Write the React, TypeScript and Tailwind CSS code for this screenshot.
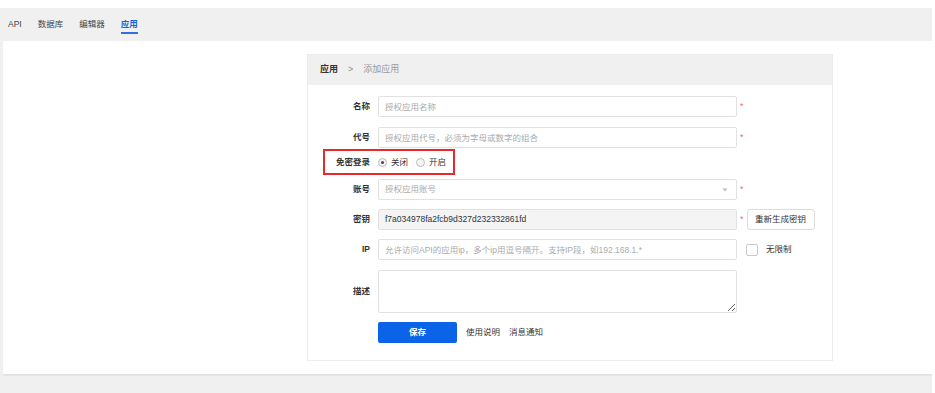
import React from "react";

const font = { fontFamily: '"Liberation Sans", "Noto Sans CJK SC", sans-serif' };

function Label({ children }: { children: React.ReactNode }) {
  return (
    <div className="w-[62px] shrink-0 text-right font-bold text-[8.5px] text-[#333] leading-none">
      {children}
    </div>
  );
}

function Star() {
  return <span className="ml-[3px] text-[9px] leading-none text-[#f56c6c]">*</span>;
}

export default function App() {
  return (
    <div className="w-[935px] h-[393px] bg-white pt-[8px] overflow-hidden" style={font}>
      <div className="w-[932px] h-[385px] bg-[#f0f0f0] flex flex-col">
        {/* tabs */}
        <div className="h-[33px] flex items-start gap-[16px] pl-[8px] pt-[11px] text-[8.5px] text-[#444] shrink-0">
          <span className="leading-[10px]">API</span>
          <span className="leading-[10px]">数据库</span>
          <span className="leading-[10px]">编辑器</span>
          <span className="leading-[10px] text-[#1a5fd8] font-bold border-b-2 border-[#2f6fe0] pb-[3px]">应用</span>
        </div>
        {/* panel */}
        <div className="ml-[3px] w-[929px] h-[334px] bg-white border-b border-[#e2e2e2] shadow-[0_1px_1px_rgba(0,0,0,0.04)] pt-[13px] pl-[304px] shrink-0">
          <div className="w-[526px] h-[307px] border border-[#ececec] bg-white flex flex-col">
            <div className="h-[30px] bg-[#f0f0f0] flex items-center pl-[12px] text-[9px] shrink-0">
              <span className="font-bold text-[#333]">应用</span>
              <span className="ml-[10px] mr-[10px] text-[#888] text-[9px]">&gt;</span>
              <span className="text-[#999]">添加应用</span>
            </div>
            <div className="flex flex-col pt-[11px]">
              {/* 名称 */}
              <div className="h-[21px] flex items-center">
                <Label>名称</Label>
                <input
                  className="ml-[8px] w-[359px] h-[21px] border border-[#e1e1e1] rounded-[2px] px-[6px] text-[8.5px] placeholder:text-[#aaa] outline-none"
                  placeholder="授权应用名称"
                />
                <Star />
              </div>
              {/* 代号 */}
              <div className="mt-[10px] h-[21px] flex items-center">
                <Label>代号</Label>
                <input
                  className="ml-[8px] w-[359px] h-[21px] border border-[#e1e1e1] rounded-[2px] px-[6px] text-[8.5px] placeholder:text-[#aaa] outline-none"
                  placeholder="授权应用代号，必须为字母或数字的组合"
                />
                <Star />
              </div>
              {/* 免密登录 */}
              <div className="mt-[1px] h-[26px] flex items-center relative">
                <div className="absolute left-[15px] top-0 w-[132px] h-[26px] border-2 border-[#e8282b]" />
                <Label>免密登录</Label>
                <div className="ml-[8px] flex items-center text-[8.5px] text-[#333]">
                  <span className="w-[9px] h-[9px] rounded-full border border-[#bbb] bg-[#f4f4f4] flex items-center justify-center">
                    <span className="w-[3px] h-[3px] rounded-full bg-[#444]" />
                  </span>
                  <span className="ml-[4px]">关闭</span>
                  <span className="ml-[8px] w-[9px] h-[9px] rounded-full border border-[#bbb] bg-[#f4f4f4]" />
                  <span className="ml-[4px]">开启</span>
                </div>
              </div>
              {/* 账号 */}
              <div className="mt-[4px] h-[21px] flex items-center">
                <Label>账号</Label>
                <div className="ml-[8px] w-[359px] h-[21px] border border-[#e1e1e1] rounded-[2px] px-[6px] flex items-center justify-between text-[8.5px] text-[#aaa]">
                  <span>授权应用账号</span>
                  <svg width="6" height="4" viewBox="0 0 6 4" className="mr-[2px]">
                    <path d="M0.5 0.5 L3 3.5 L5.5 0.5 Z" fill="#b8bccc" />
                  </svg>
                </div>
                <Star />
              </div>
              {/* 密钥 */}
              <div className="mt-[9px] h-[21px] flex items-center">
                <Label>密钥</Label>
                <div className="ml-[8px] w-[359px] h-[21px] border border-[#e1e1e1] rounded-[2px] px-[6px] flex items-center bg-[#f4f4f4] text-[8.5px] text-[#333]">
                  f7a034978fa2fcb9d327d232332861fd
                </div>
                <Star />
                <button className="ml-[3px] w-[68px] h-[21px] border border-[#dcdcdc] rounded-[3px] bg-white text-[8.5px] text-[#333]">
                  重新生成密钥
                </button>
              </div>
              {/* IP */}
              <div className="mt-[9px] h-[21px] flex items-center">
                <Label>IP</Label>
                <input
                  className="ml-[8px] w-[359px] h-[21px] border border-[#e1e1e1] rounded-[2px] px-[6px] text-[8.5px] placeholder:text-[#aaa] outline-none"
                  placeholder="允许访问API的应用ip，多个ip用逗号隔开。支持IP段，如192.168.1.*"
                />
                <span className="ml-[9px] w-[12px] h-[12px] rounded-[2px] border border-[#c8c8c8] bg-white" />
                <span className="ml-[8px] text-[8.5px] text-[#333]">无限制</span>
              </div>
              {/* 描述 */}
              <div className="mt-[10px] h-[43px] flex items-center">
                <Label>描述</Label>
                <textarea className="ml-[8px] w-[359px] h-[43px] border border-[#e1e1e1] rounded-[2px] px-[6px] text-[8.5px] outline-none resize-y" />
              </div>
              {/* buttons */}
              <div className="mt-[9px] h-[21px] flex items-center">
                <div className="w-[62px] shrink-0" />
                <button className="ml-[8px] w-[79px] h-[21px] rounded-[2px] bg-[#0b63e8] text-white text-[8.5px] font-bold">
                  保存
                </button>
                <span className="ml-[9px] text-[8.5px] text-[#333]">使用说明</span>
                <span className="ml-[9px] text-[8.5px] text-[#333]">消息通知</span>
              </div>
            </div>
          </div>
        </div>
      </div>
    </div>
  );
}
